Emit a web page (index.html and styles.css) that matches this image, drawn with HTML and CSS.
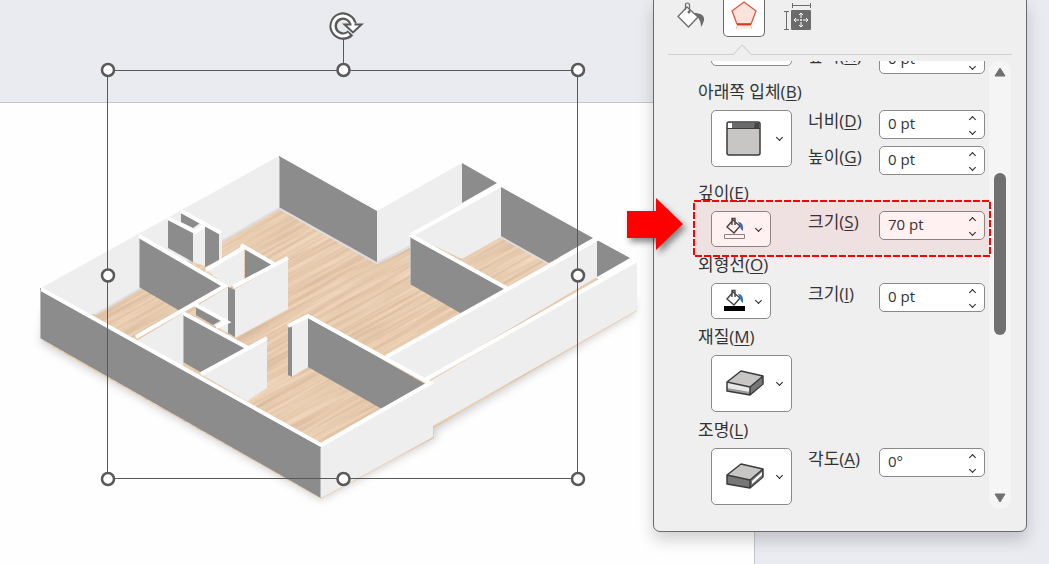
FILE: index.html
```
<!DOCTYPE html>
<html lang="ko">
<head>
    <meta charset="UTF-8">
    <meta name="viewport" content="width=device-width, initial-scale=1.0">
    <title>3차원 서식</title>
    <link rel="stylesheet" href="styles.css">
</head>
<body>

    <main class="workspace">
        <div class="slide"></div>

        <svg class="drawing" viewBox="0 0 650 564" role="img" aria-label="평면도">
            <defs>
                <filter id="soft" x="-10%" y="-10%" width="120%" height="120%"><feGaussianBlur stdDeviation="4"/></filter>
                <filter id="grain" x="0" y="0" width="100%" height="100%" color-interpolation-filters="sRGB">
                    <feTurbulence type="fractalNoise" baseFrequency="0.01 0.35" numOctaves="3" seed="4"/>
                    <feColorMatrix values="0.17 0 0 0 0.82  0.19 0 0 0 0.7  0.21 0 0 0 0.58  0 0 0 0 1"/>
                </filter>
                <clipPath id="floor"><path d="M41 300 279 206 377 261 462 205 637 300V311L434 428V438L321 499 44 342Z"/></clipPath>
            </defs>

            <path d="M44 310 300 300 635 300V313L436 431V439L321 500 41 343Z" fill="#999" opacity=".45" filter="url(#soft)"/>

            <g clip-path="url(#floor)">
                <rect x="-300" y="100" width="900" height="700" transform="rotate(-29)" fill="#e8ccb2" filter="url(#grain)"/>
            </g>

            <!-- light faces, back -->
            <g fill="#eee">
                <path d="M41 288 279 156V208L96 314 41 320Z"/>
                <path d="M377 211 462 163V204L411 234V247L377 264Z"/>
                <path d="M412 235 501 187V237L462 259Z"/>
            </g>
            <path d="M96 314 279 208.500 377 263 411 246M501 237 549 264" fill="none" stroke="#dedee2" stroke-width="2"/>
            <g fill="#8c8c8c">
                <path d="M279 156 377 211V262L279 207Z"/>
                <path d="M462 163 497 183 462 203Z"/>
                <path d="M501 187 593 238 549 263 501 236Z"/>
                <path d="M410 234 506 289 462 314 410 284Z"/>
                <path d="M139 236 224 286 180 311 139 287Z"/>
                <path d="M168 219 193 232V262L168 248Z"/>
                <path d="M181 212 200 223 193 228 181 222Z"/>
            </g>

            <!-- long wall on the right -->
            <path d="M386 358 597 240V277L424 380Z" fill="#eee"/>
            <path d="M597 240 630 258 597 277Z" fill="#8c8c8c"/>

            <!-- small rooms on the left -->
            <path d="M193 232 205 226V266L193 262ZM219 232 222 233V258L219 260Z" fill="#eee"/>
            <path d="M205 226 219 233V260L205 267Z" fill="#8c8c8c"/>
            <path d="M207 270 244 248V280L228 288Z" fill="#eee"/>
            <path d="M245 249 272 264 245 280Z" fill="#8c8c8c"/>
            <path d="M200 304 228 287V333L205 320Z" fill="#eee"/>
            <path d="M228 287 235 290V337L228 333Z" fill="#8c8c8c"/>
            <path d="M235 289 288 260V309L235 338Z" fill="#eee"/>
            <path d="M196 306 222 320 213 325 196 315Z" fill="#8c8c8c"/>
            <path d="M136 341 183 313V368Z" fill="#eee"/>
            <path d="M183 314 245 348 202 373 183 362Z" fill="#8c8c8c"/>
            <path d="M201 374 267 338V388L247 401Z" fill="#eee"/>
            <path d="M291 327 308 317V367L291 377Z" fill="#eee"/>
            <path d="M288 325 292 327V377L288 375Z" fill="#8c8c8c"/>
            <path d="M308 317 425 384 382 409 308 367Z" fill="#8c8c8c"/>

            <!-- outer faces, front -->
            <path d="M637 259V310L433 426V437L321 498V446L432 380Z" fill="#eee"/>
            <path d="M40 288 321 446V498L40 338Z" fill="#8c8c8c"/>

            <!-- wall tops -->
            <g fill="none" stroke="#fff" stroke-width="4">
                <path d="M41 289 321 445 430 383 308 316 288 326"/>
                <path d="M411 235 501 185M410 235 508 289M386 357 599 238M425 380 637 260"/>
                <path d="M139 236 225 286 136 337M206 270 243 248M241 245 274 264M233 287 288 258"/>
                <path d="M168 218 195 232 204 226M181 211 221 233"/>
                <path d="M194 304 227 322 216 327M183 313 248 348M201 374 267 338"/>
            </g>
            <path d="M40.500 290V338M320.500 448V498M183.500 315V362M139.500 239V287M279.500 158V207M410.500 237V284" stroke="#bbb" fill="none"/>

            <!-- selection frame -->
            <path d="M108 70.500H578M108 478.500H578M107.500 70V479M577.500 70V479M343.500 38V70" fill="none" stroke="#595959"/>
            <g fill="#fff" stroke="#595959" stroke-width="2.500">
                <circle cx="108" cy="70" r="6"/><circle cx="343.500" cy="70" r="6"/><circle cx="578" cy="70" r="6"/>
                <circle cx="108" cy="275.500" r="6"/><circle cx="578" cy="275.500" r="6"/>
                <circle cx="108" cy="479" r="6"/><circle cx="343.500" cy="479" r="6"/><circle cx="578" cy="479" r="6"/>
            </g>
            <g fill="none">
                <path d="M350.500 33A10 10 0 1 1 353 24" stroke="#595959" stroke-width="7.500"/>
                <path d="M349 34A10 10 0 1 1 353 26" stroke="#fff" stroke-width="3"/>
                <path d="M344.500 24.500H361.500L353 32.500Z" fill="#fff" stroke="#595959" stroke-width="2"/>
                <path d="M351.500 22H354.500V27H351.500Z" fill="#fff"/>
            </g>
        </svg>
    </main>

    <aside class="panel">
        <nav class="tabs">
            <button class="tab" type="button" aria-label="채우기 및 선">
                <svg width="30" height="30" viewBox="0 0 30 30">
                    <path d="M11 7 22 17 12.500 27 2 16.500Z" fill="#fff" stroke="#6b6b6b" stroke-width="1.300"/>
                    <path d="M18 13C28 13 31 18 25 27 25 21 23 18 18 13Z" fill="#6b6b6b"/>
                    <path d="M9.500 10V5Q9.500 3 11.500 3T13.500 5V11" fill="none" stroke="#6b6b6b" stroke-width="1.200"/>
                    <circle cx="13" cy="12" r="1.500" fill="#6b6b6b"/>
                </svg>
            </button>
            <button class="tab active" type="button" aria-label="효과">
                <svg width="30" height="30" viewBox="0 0 30 30">
                    <path d="M15 2 27 11 22 24H8L3 11Z" fill="#f9e4dd" stroke="#db5a42" stroke-width="1.300"/>
                    <path d="M8 24.500H22" stroke="#d83b1c" stroke-width="2"/>
                    <path d="M8 26 7 29M22 26 23 29" stroke="#efb5a8"/>
                    <path d="M8 26H22L23 29H7Z" fill="#f9e4dd" opacity=".7"/>
                </svg>
            </button>
            <button class="tab" type="button" aria-label="크기 및 속성">
                <svg width="30" height="30" viewBox="0 0 30 30">
                    <rect x="9" y="10" width="20" height="20" rx="1" fill="#6b6b6b"/>
                    <path d="M10 5.500H28M10.500 3V8M28.500 3V8M4.500 11V29M2 11.500H7M2 29.500H7" stroke="#6b6b6b" fill="none"/>
                    <path d="M19 13V18M19 22V27M12 20H17M21 20H26M17 15 19 13 21 15M17 25 19 27 21 25M14 18 12 20 14 22M24 18 26 20 24 22M19 19V21M18 20H20" stroke="#fff" fill="none"/>
                </svg>
            </button>
        </nav>
        <svg class="divider" viewBox="0 0 343 12" preserveAspectRatio="xMinYMin slice"><path d="M0 10.500H65L74 1 83 10.500H600" fill="#efefef" stroke="#cfcfcf"/></svg>

        <div class="panel-body">
            <form class="options">
                <div class="row">
                    <button class="picker large" type="button" aria-label="위쪽 입체"></button>
                    <div class="sizes">
                        <label for="top-h">높이(<u>H</u>)</label>
                        <span class="spin"><input id="top-h" type="text" value="0 pt"><span class="steps"><button type="button" aria-label="증가"></button><button type="button" aria-label="감소"></button></span></span>
                    </div>
                </div>

                <h2>아래쪽 입체(<u>B</u>)</h2>
                <div class="row">
                    <button class="picker large" type="button" aria-label="아래쪽 입체">
                        <svg width="36" height="36" viewBox="0 0 36 36">
                            <rect x="1" y="1" width="33" height="33" rx="2" fill="#c8c6c4" stroke="#3b3b3b" stroke-width="1.500"/>
                            <path d="M2 2H33V7H2Z" fill="#6b6b6b"/><path d="M2 2H6V7H2Z" fill="#fff"/><path d="M29 2H33V7H28Z" fill="#444"/>
                            <path d="M1 7.500H34" stroke="#3b3b3b"/>
                        </svg>
                    </button>
                    <div class="sizes">
                        <label for="bottom-w">너비(<u>D</u>)</label>
                        <span class="spin"><input id="bottom-w" type="text" value="0 pt"><span class="steps"><button type="button" aria-label="증가"></button><button type="button" aria-label="감소"></button></span></span>
                        <label for="bottom-h">높이(<u>G</u>)</label>
                        <span class="spin"><input id="bottom-h" type="text" value="0 pt"><span class="steps"><button type="button" aria-label="증가"></button><button type="button" aria-label="감소"></button></span></span>
                    </div>
                </div>

                <h2>깊이(<u>E</u>)</h2>
                <div class="row">
                    <button class="picker" type="button" aria-label="깊이 색">
                        <svg width="24" height="24" viewBox="0 0 24 24">
                            <path d="M10 3 17 9 11 16 4 10ZM9 8V1.500H12V8" fill="none" stroke="#444" stroke-width="1.400"/>
                            <path d="M15 5Q21 5 20 14 17 12 17 9Z" fill="#2e75b6"/>
                            <path d="M1.500 17.500H21.500V21.500H1.500Z" fill="#fff" stroke="#888"/>
                        </svg>
                    </button>
                    <div class="sizes">
                        <label for="depth">크기(<u>S</u>)</label>
                        <span class="spin"><input id="depth" type="text" value="70 pt"><span class="steps"><button type="button" aria-label="증가"></button><button type="button" aria-label="감소"></button></span></span>
                    </div>
                </div>

                <h2>외형선(<u>O</u>)</h2>
                <div class="row">
                    <button class="picker" type="button" aria-label="외형선 색">
                        <svg width="24" height="24" viewBox="0 0 24 24">
                            <path d="M10 3 17 9 11 16 4 10ZM9 8V1.500H12V8" fill="none" stroke="#444" stroke-width="1.400"/>
                            <path d="M15 5Q21 5 20 14 17 12 17 9Z" fill="#2e75b6"/>
                            <path d="M1 17H22V22H1Z"/>
                        </svg>
                    </button>
                    <div class="sizes">
                        <label for="contour">크기(<u>I</u>)</label>
                        <span class="spin"><input id="contour" type="text" value="0 pt"><span class="steps"><button type="button" aria-label="증가"></button><button type="button" aria-label="감소"></button></span></span>
                    </div>
                </div>

                <h2>재질(<u>M</u>)</h2>
                <div class="row">
                    <button class="picker large" type="button" aria-label="재질">
                        <svg width="38" height="28" viewBox="0 0 38 28">
                            <path d="M1 13 24 17V25L1 20Z" fill="#e8e8e8"/><path d="M1 18 24 22V25L1 21Z" fill="#999"/>
                            <path d="M24 17 37 6V13L24 25Z" fill="#777"/>
                            <path d="M1 12 15 1 37 6 24 17Z" fill="#c8c6c4"/>
                            <path d="M1 12 15 1 37 6V14L24 25 1 21ZM1 12 24 17 37 6M24 17V25" fill="none" stroke="#3b3b3b" stroke-width="1.500" stroke-linejoin="round"/>
                        </svg>
                    </button>
                </div>

                <h2>조명(<u>L</u>)</h2>
                <div class="row">
                    <button class="picker large" type="button" aria-label="조명">
                        <svg width="38" height="28" viewBox="0 0 38 28">
                            <path d="M1 12 24 17V25L1 21Z" fill="#777"/>
                            <path d="M24 17 37 6V13L24 25Z" fill="#777"/><path d="M26 18 36 9V12L26 21Z" fill="#fff"/>
                            <path d="M1 12 15 1 37 6 24 17Z" fill="#c8c6c4"/>
                            <path d="M1 12 15 1 37 6V14L24 25 1 21ZM1 12 24 17 37 6M24 17V25" fill="none" stroke="#3b3b3b" stroke-width="1.500" stroke-linejoin="round"/>
                        </svg>
                    </button>
                    <div class="sizes">
                        <label for="angle">각도(<u>A</u>)</label>
                        <span class="spin"><input id="angle" type="text" value="0°"><span class="steps"><button type="button" aria-label="증가"></button><button type="button" aria-label="감소"></button></span></span>
                    </div>
                </div>
            </form>

            <div class="scrollbar">
                <svg width="12" height="10" viewBox="0 0 12 10"><path d="M6 1 11 9H1Z" fill="#707070" stroke="#707070" stroke-linejoin="round"/></svg>
                <div class="track"><div class="thumb"></div></div>
                <svg width="12" height="10" viewBox="0 0 12 10"><path d="M6 9 11 1H1Z" fill="#707070" stroke="#707070" stroke-linejoin="round"/></svg>
            </div>
        </div>
    </aside>

    <svg class="callout" viewBox="0 0 298 57"><rect x="1" y="1" width="296" height="55" fill="#f00" fill-opacity=".055" stroke="#f00" stroke-width="2" stroke-dasharray="7 2"/></svg>
    <svg class="arrow" viewBox="0 0 70 70"><path d="M1 14H30V1L57 27 30 53V41H1Z" fill="#f00"/></svg>

</body>
</html>
```
FILE: styles.css
```
*, *::before, *::after {
    box-sizing: border-box;
    margin: 0;
    padding: 0;
}
body {
    position: relative;
    height: 100vh;
    overflow: hidden;
    background-color: #eaebf1;
    color: #333;
    font-family: "Open Sans", "Noto Sans CJK KR", sans-serif;
    font-size: 17px;
}
button, input {
    font: inherit;
    color: inherit;
    border: none;
    background: none;
}
.workspace {
    height: 100%;
    padding-top: 102px;
}
.slide {
    width: 72%;
    height: 100%;
    background-color: #fefefe;
    border-top: 1px solid #c6c6c6;
    border-right: 1px solid #c6c6c6;
}
.drawing {
    position: absolute;
    top: 0;
    left: 0;
    width: 650px;
    height: 564px;
}

/* format panel floats over the slide */
.panel {
    position: absolute;
    top: -1px;
    right: 22px;
    bottom: 32px;
    width: 374px;
    display: flex;
    flex-direction: column;
    background-color: #efefef;
    border: 1px solid #6a6a6a;
    border-radius: 0 0 7px 7px;
    box-shadow: 0 8px 16px rgba(0, 0, 0, 0.18);
}
.tabs {
    display: flex;
    gap: 11px;
    height: 37px;
    padding-left: 16px;
}
.tab {
    display: flex;
    justify-content: center;
    width: 42px;
    height: 37px;
}
.tab.active {
    background-color: #fff;
    border: 1px solid #6a6a6a;
    border-top: none;
    border-radius: 0 0 5px 5px;
}
.divider {
    height: 12px;
    margin: 7px 14px 5px;
}
.panel-body {
    flex: 1;
    display: flex;
    min-height: 0;
    padding: 0 15px 22px 44px;
}
.options {
    flex: 1;
    display: flex;
    flex-direction: column;
    justify-content: flex-end;
    overflow: hidden;
    padding-bottom: 4px;
}
h2 {
    flex: none;
    font-size: 17px;
    font-weight: normal;
    line-height: 36px;
}
u {
    text-underline-offset: 2px;
    text-decoration-thickness: 1px;
}
.row {
    flex: none;
    display: flex;
    justify-content: space-between;
    align-items: flex-start;
    padding: 0 4px 0 13px;
}
.sizes {
    display: grid;
    grid-template-columns: 71px 106px;
    row-gap: 7px;
}
.row:first-child {
    align-items: flex-end;
}
.row:first-child .picker {
    margin-bottom: 8px;
}
.sizes label {
    line-height: 22px;
}
.picker {
    display: flex;
    align-items: center;
    justify-content: space-between;
    width: 60px;
    height: 36px;
    padding: 0 9px 0 11px;
    background-color: #fff;
    border: 1px solid #8a8a8a;
    border-radius: 5px;
}
.picker.large {
    width: 81px;
    height: 57px;
    padding-left: 14px;
}
.picker::after, .steps button::before {
    content: "";
    width: 5px;
    height: 5px;
    border: solid #222;
    border-width: 0 1px 1px 0;
    transform: rotate(45deg);
}
.picker::after {
    margin-bottom: 2px;
}
.spin {
    display: flex;
    height: 29px;
    background-color: #fff;
    border: 1px solid #8a8a8a;
    border-radius: 5px;
}
.spin input {
    flex: 1;
    min-width: 0;
    padding: 0 0 3px 8px;
    font-size: 15px;
    outline: none;
}
.steps {
    display: flex;
    flex-direction: column;
    justify-content: space-between;
    width: 23px;
    padding: 3px 0 2px;
}
.steps button {
    display: flex;
    justify-content: center;
    align-items: center;
    height: 10px;
}
.steps button:first-child::before {
    transform: rotate(225deg);
}
.scrollbar {
    display: flex;
    flex-direction: column;
    align-items: center;
    width: 22px;
    padding: 6px 0;
    background-color: #f5f5f5;
    border-radius: 11px;
}
.track {
    flex: 1;
    padding-top: 96px;
}
.thumb {
    width: 12px;
    height: 162px;
    border-radius: 6px;
    background-color: #707070;
}

/* marks on top of the panel */
.callout {
    position: absolute;
    top: 200px;
    right: 58px;
    width: 298px;
    height: 57px;
    pointer-events: none;
}
.arrow {
    position: absolute;
    top: 197px;
    right: 353px;
    width: 70px;
    height: 70px;
    filter: drop-shadow(3px 4px 3px rgba(0, 0, 0, 0.45));
}
```
